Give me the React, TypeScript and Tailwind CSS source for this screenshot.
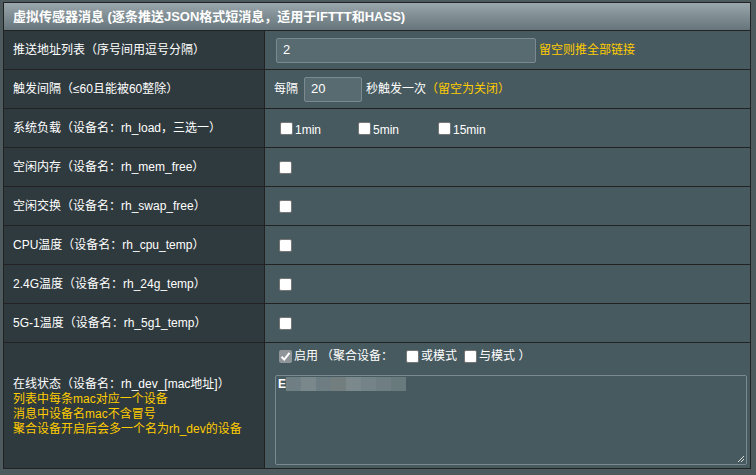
import React from "react";

const font = "font-['Liberation_Sans','Noto_Sans_CJK_SC',sans-serif]";

const Box = ({ checked = false }: { checked?: boolean }) =>
    checked ? (
        <span className="inline-flex w-[13px] h-[13px] rounded-[2px] bg-[#8f9598] items-center justify-center shrink-0">
            <svg width="11" height="11" viewBox="0 0 11 11">
                <path d="M1.5 5.8 L4.2 8.5 L9.5 1.8" stroke="#fff" strokeWidth="2" fill="none" />
            </svg>
        </span>
    ) : (
        <span className="inline-block w-[13px] h-[13px] rounded-[2px] bg-white border border-[#767676] shrink-0" />
    );

const Row = ({ label, children }: { label: React.ReactNode, children?: React.ReactNode }) => (
    <div className="flex border-t border-[#222] h-[39px]">
        <div className="w-[260px] bg-[#2f3a3e] flex items-center pl-[9px] text-[12px] text-white">{label}</div>
        <div className="flex-1 border-l border-[#222] bg-[#475a5f] flex items-center text-[12px] text-white">{children}</div>
    </div>
);

const simpleRows = [
    "空闲内存（设备名：rh_mem_free）",
    "空闲交换（设备名：rh_swap_free）",
    "CPU温度（设备名：rh_cpu_temp）",
    "2.4G温度（设备名：rh_24g_temp）",
    "5G-1温度（设备名：rh_5g1_temp）",
];

const blur = ["#6f7f84", "#7a888c", "#6d7d82", "#727f7e", "#7b898d", "#748388", "#6f7e83", "#697a7c"];

export default function App() {
    return (
        <div className={`min-h-screen bg-[#4d5a5e] pt-[2px] pl-[3px] ${font}`}>
            <div className="w-[748px] border border-[#222]">

                {/* Header */}
                <div className="h-[27px] bg-gradient-to-b from-[#9aa7ac] to-[#66757b] flex items-center pl-[9px] text-[13px] font-bold text-white">
                    虚拟传感器消息 (逐条推送JSON格式短消息，适用于IFTTT和HASS)
                </div>

                <Row label="推送地址列表（序号间用逗号分隔）">
                    <div className="ml-[11px] w-[260px] h-[25px] bg-[#576b71] border border-[#7b8a8e] rounded-[2px] flex items-center pl-[6px] text-[13px]">2</div>
                    <span className="ml-[3px] text-[#ffcc00]">留空则推全部链接</span>
                </Row>

                <Row label="触发间隔（≤60且能被60整除）">
                    <span className="ml-[9px]">每隔</span>
                    <div className="ml-[6px] w-[58px] h-[25px] bg-[#576b71] border border-[#7b8a8e] rounded-[2px] flex items-center pl-[6px] text-[13px]">20</div>
                    <span className="ml-[4px]">秒触发一次</span>
                    <span className="text-[#ffcc00]">（留空为关闭）</span>
                </Row>

                <Row label="系统负载（设备名：rh_load，三选一）">
                    <div className="ml-[15px] flex items-end">
                        <label className="w-[78px] flex items-center gap-[2px]"><Box /><span className="mt-[3px]">1min</span></label>
                        <label className="w-[80px] flex items-center gap-[2px]"><Box /><span className="mt-[3px]">5min</span></label>
                        <label className="flex items-center gap-[2px]"><Box /><span className="mt-[3px]">15min</span></label>
                    </div>
                </Row>

                {simpleRows.map((r) => (
                    <Row key={r} label={r}>
                        <span className="ml-[14px] flex"><Box /></span>
                    </Row>
                ))}

                {/* Online status */}
                <div className="flex border-t border-[#222] h-[126px]">
                    <div className="w-[260px] bg-[#2f3a3e] flex flex-col justify-center pl-[9px] pt-[2px] text-[12px] leading-[15px]">
                        <span className="text-white">在线状态（设备名：rh_dev_[mac地址]）</span>
                        <span className="text-[#ffcc00]">列表中每条mac对应一个设备</span>
                        <span className="text-[#ffcc00]">消息中设备名mac不含冒号</span>
                        <span className="text-[#ffcc00]">聚合设备开启后会多一个名为rh_dev的设备</span>
                    </div>
                    <div className="flex-1 border-l border-[#222] bg-[#475a5f] flex flex-col pl-[10px] pt-[3px] text-[12px] text-white">
                        <div className="flex items-center h-[20px] pl-[4px]">
                            <Box checked />
                            <span className="ml-[2px]">启用</span>
                            <span className="ml-[3px]">（聚合设备：</span>
                            <span className="ml-[13px] flex"><Box /></span>
                            <span className="ml-[2px]">或模式</span>
                            <span className="ml-[7px] flex"><Box /></span>
                            <span className="ml-[2px]">与模式 ）</span>
                        </div>
                        <div className="relative mt-[9px] w-[472px] h-[90px] border border-[#7b8a8e] rounded-[2px] pl-[2px]">
                            <div className="flex items-center h-[15px]">
                                <span className="text-[12px] font-bold">E</span>
                                {blur.map((c, i) => (
                                    <span key={i} className="inline-block w-[15px] h-[14px]" style={{ backgroundColor: c }} />
                                ))}
                            </div>
                            <svg className="absolute right-[1px] bottom-[1px]" width="9" height="9" viewBox="0 0 9 9">
                                <path d="M8 2 L2 8 M8 5 L5 8" stroke="#ddd" strokeWidth="1" />
                            </svg>
                        </div>
                    </div>
                </div>

            </div>
        </div>
    );
}
